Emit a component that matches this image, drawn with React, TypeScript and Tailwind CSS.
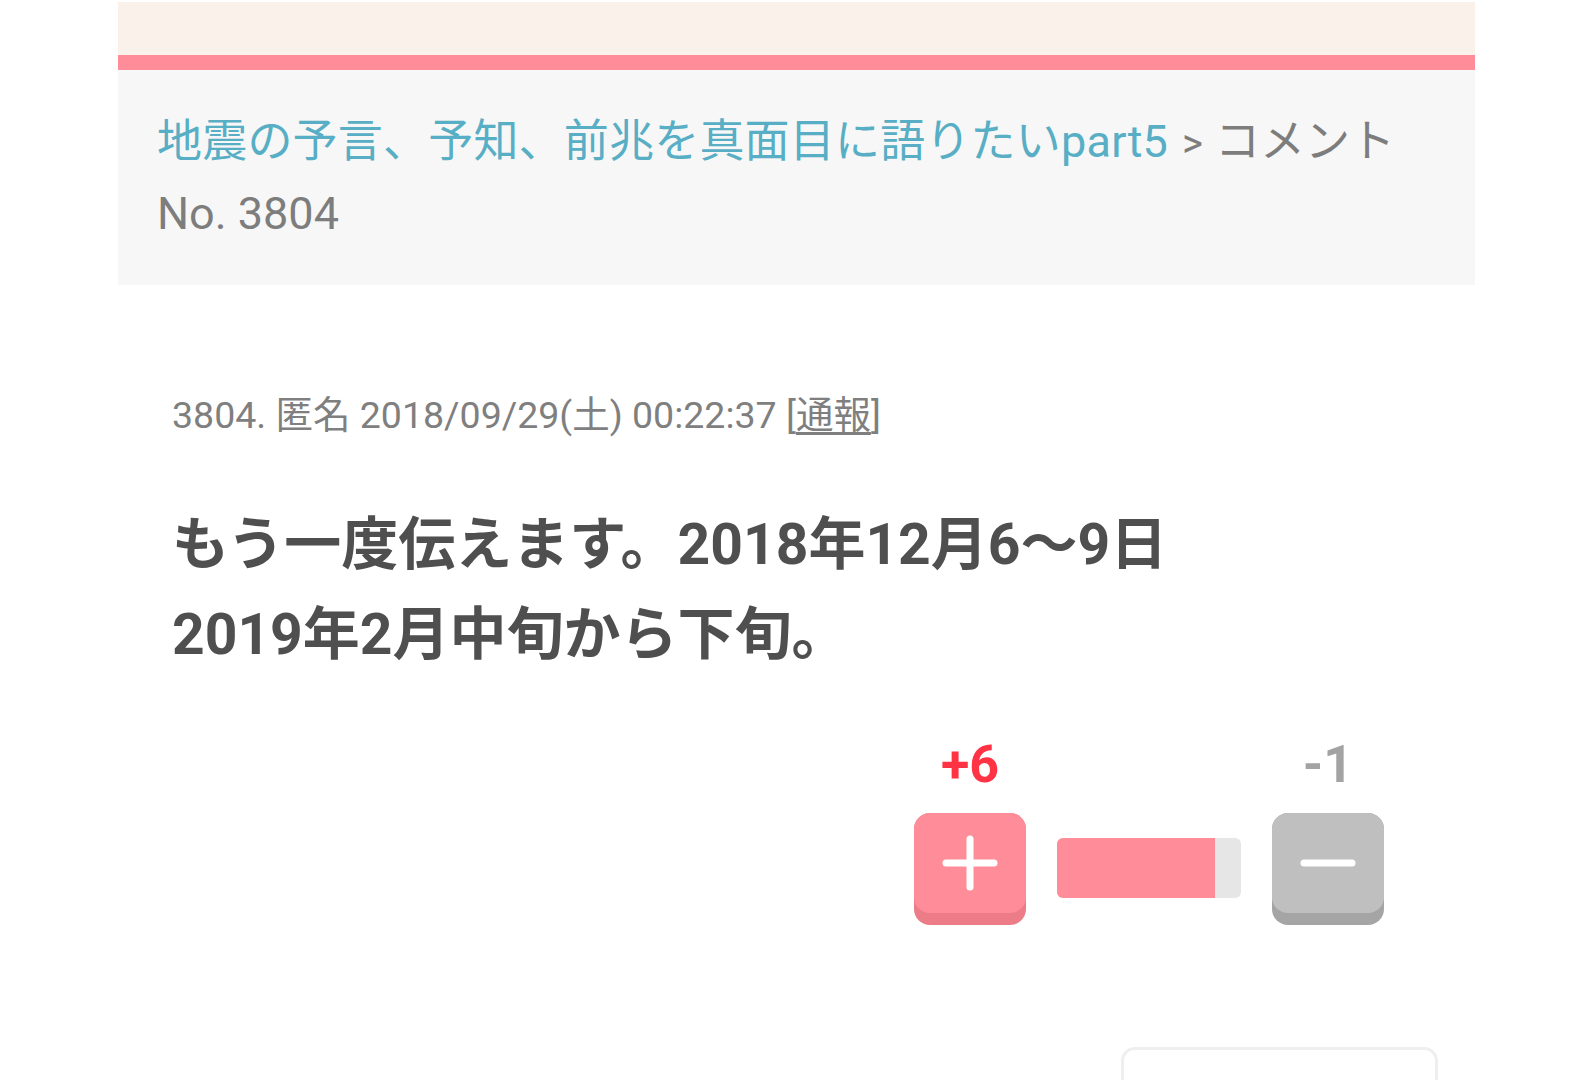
const font = "font-['Roboto','Noto_Sans_CJK_JP',sans-serif]";

const VoteKey = ({ face, base, children }: { face: string; base: string; children: React.ReactNode }) => (
    <div className={`w-[112px] h-[112px] rounded-[16px] ${base}`}>
        <div className={`h-[100px] rounded-[16px] flex items-center justify-center ${face}`}>{children}</div>
    </div>
);

export default function App() {
    const plus = 6;
    const minus = 1;
    const ratio = (plus / (plus + minus)) * 100;

    return (
        <div className={`min-h-screen bg-white pt-[2px] pl-[118px] ${font}`}>
            <div className="w-[1357px]">
                <div className="h-[53px] bg-[#faf2ea]" />
                <div className="h-[15px] bg-[#ff8d99]" />
                <div className="h-[215px] bg-[#f7f7f7] pl-[39px] pr-[60px] pt-[37px] text-[45px] leading-[70px] text-[#7d7d7d]">
                    <a className="text-[#58aec4] tracking-[0.2px]" href="#">地震の予言、予知、前兆を真面目に語りたいpart5</a>
                    <span className="text-[40px] pl-[4px] pr-[2px]"> &gt; </span>コメント No. 3804
                </div>

                <div className="pl-[54px] mt-[106px]">
                    <p className="text-[37.5px] leading-[48px] text-[#7f7f7f]">
                        3804. 匿名 2018/09/29(土) 00:22:37 [<span className="underline underline-offset-4">通報</span>]
                    </p>
                    <p className="mt-[61px] text-[57px] leading-[90px] font-bold text-[#4f4f4f]">
                        もう一度伝えます。2018年12月6〜9日
                        <br />
                        2019年2月中旬から下旬。
                    </p>
                </div>

                <div className="mt-[55px] flex justify-end pr-[91px]">
                    <div className="flex items-end gap-[31px]">
                        <div className="flex flex-col items-center gap-[18px]">
                            <span className="text-[52px] leading-[60px] font-bold text-[#ff3344]">+{plus}</span>
                            <VoteKey face="bg-[#ff8d99]" base="bg-[#eb7c88]">
                                <svg width="56" height="56" viewBox="0 0 56 56">
                                    <path d="M4 28H52M28 4V52" stroke="white" strokeWidth="7" strokeLinecap="round" />
                                </svg>
                            </VoteKey>
                        </div>
                        <div className="mb-[27px] w-[184px] h-[60px] rounded-[6px] bg-[#e6e6e6] overflow-hidden">
                            <div className="h-full bg-[#ff8d99]" style={{ width: `${ratio}%` }} />
                        </div>
                        <div className="flex flex-col items-center gap-[18px]">
                            <span className="text-[52px] leading-[60px] font-bold text-[#a3a3a3]">-{minus}</span>
                            <VoteKey face="bg-[#bfbfbf]" base="bg-[#a5a5a5]">
                                <svg width="56" height="56" viewBox="0 0 56 56">
                                    <path d="M4 28H52" stroke="white" strokeWidth="7" strokeLinecap="round" />
                                </svg>
                            </VoteKey>
                        </div>
                    </div>
                </div>

                <div className="mt-[122px] flex justify-end pr-[37px]">
                    <div className="w-[317px] h-[100px] rounded-[14px] border-[3px] border-[#efefef]" />
                </div>
            </div>
        </div>
    );
}
